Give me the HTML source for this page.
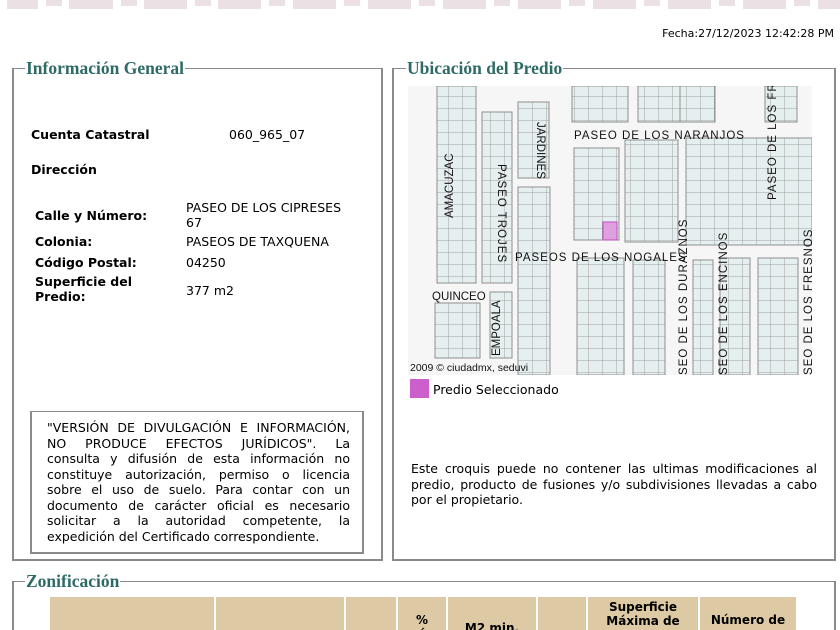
<!DOCTYPE html>
<html style="overflow:hidden;height:630px"><head><meta charset="utf-8"><style>
body{margin:0;width:840px;height:630px;overflow:hidden;background:#fff;font-family:"DejaVu Sans","Liberation Sans",sans-serif;font-size:12px;color:#000;position:relative}
.a{position:absolute}
.fs{position:absolute;border:2px solid #8a8a8a;border-top:1px solid #8a8a8a;box-sizing:border-box}
.lg{position:absolute;background:#fff;font-family:"Liberation Serif",serif;font-weight:bold;font-size:17.5px;color:#2e6b67;padding:0 1px;line-height:18px}
.b{font-weight:bold}
th{background:#ddc9a3;font-size:12px;font-weight:bold;padding:0;}
.j span{display:block;text-align:justify;text-align-last:justify;white-space:nowrap}
.j span.l{text-align-last:left}
</style></head><body>
<svg class="a" style="left:0;top:0" width="840" height="12">
<g fill="#ebe1e4">
<rect x="7" y="0" width="31" height="9"/><rect x="46" y="0" width="16" height="6"/><rect x="69" y="0" width="44" height="9"/><rect x="121" y="0" width="16" height="6"/><rect x="144" y="0" width="43" height="9"/><rect x="195" y="0" width="16" height="6"/><rect x="218" y="0" width="43" height="9"/><rect x="269" y="0" width="16" height="6"/><rect x="293" y="0" width="43" height="9"/><rect x="344" y="0" width="16" height="6"/><rect x="368" y="0" width="43" height="9"/><rect x="419" y="0" width="16" height="6"/><rect x="443" y="0" width="43" height="9"/><rect x="494" y="0" width="16" height="6"/><rect x="518" y="0" width="43" height="9"/><rect x="569" y="0" width="16" height="6"/><rect x="593" y="0" width="43" height="9"/><rect x="644" y="0" width="16" height="6"/><rect x="668" y="0" width="43" height="9"/><rect x="719" y="0" width="16" height="6"/><rect x="743" y="0" width="43" height="9"/><rect x="794" y="0" width="16" height="6"/><rect x="818" y="0" width="22" height="9"/>
</g></svg>
<div class="a" style="right:6px;top:27px;font-size:11px">Fecha:27/12/2023 12:42:28 PM</div>

<div class="fs" style="left:12px;top:68px;width:371px;height:493px"></div>
<div class="lg" style="left:25px;top:59px">Información General</div>
<div class="a b" style="left:31px;top:127px;font-size:12.5px">Cuenta Catastral</div>
<div class="a" style="left:229px;top:127px;font-size:12.5px">060_965_07</div>
<div class="a b" style="left:31px;top:162px;font-size:12.5px">Dirección</div>
<div class="a b" style="left:35px;top:208px;font-size:12.5px">Calle y Número:</div>
<div class="a" style="left:186px;top:200px;font-size:12.5px;line-height:15px">PASEO DE LOS CIPRESES<br>67</div>
<div class="a b" style="left:35px;top:234px;font-size:12.5px">Colonia:</div>
<div class="a" style="left:186px;top:234px;font-size:12.5px">PASEOS DE TAXQUENA</div>
<div class="a b" style="left:35px;top:255px;font-size:12.5px">Código Postal:</div>
<div class="a" style="left:186px;top:255px;font-size:12.5px">04250</div>
<div class="a b" style="left:35px;top:274px;font-size:12.5px;line-height:15px">Superficie del<br>Predio:</div>
<div class="a" style="left:186px;top:283px;font-size:12.5px">377 m2</div>
<div class="a" style="left:30px;top:411px;width:334px;height:143px;border:2px solid #8a8a8a;border-top:1px solid #8a8a8a;box-sizing:border-box"></div>
<div class="a j" style="left:47px;top:420px;width:303px;font-size:12.5px;line-height:15.5px">
<span>"VERSIÓN DE DIVULGACIÓN E INFORMACIÓN,</span>
<span>NO PRODUCE EFECTOS JURÍDICOS". La</span>
<span>consulta y difusión de esta información no</span>
<span>constituye autorización, permiso o licencia</span>
<span>sobre el uso de suelo. Para contar con un</span>
<span>documento de carácter oficial es necesario</span>
<span>solicitar a la autoridad competente, la</span>
<span class="l">expedición del Certificado correspondiente.</span>
</div>

<div class="fs" style="left:392px;top:68px;width:444px;height:493px"></div>
<div class="lg" style="left:406px;top:59px">Ubicación del Predio</div>
<svg class="a" style="left:408px;top:86px" width="404" height="289" viewBox="408 86 404 289" font-family="Liberation Sans,sans-serif" font-size="11.5" fill="#111">
<rect x="408" y="86" width="404" height="289" fill="#f6f6f6"/>
<defs><pattern id="g" width="14" height="12" patternUnits="userSpaceOnUse"><rect width="14" height="12" fill="#e6efef"/><path d="M0 0H14M0 0V12" stroke="#a0a0a0" stroke-width="1"/></pattern></defs>
<g fill="url(#g)" stroke="#8f8f8f">
<rect x="437" y="86" width="39" height="197"/>
<rect x="482" y="112" width="30" height="171"/>
<rect x="518" y="102" width="31" height="76"/>
<rect x="518" y="187" width="32" height="188"/>
<rect x="572" y="86" width="56" height="36"/>
<rect x="638" y="86" width="55" height="36"/>
<rect x="680" y="86" width="35" height="36"/>
<rect x="765" y="86" width="32" height="36"/>
<rect x="574" y="148" width="45" height="92"/>
<rect x="625" y="140" width="53" height="102"/>
<rect x="686" y="138" width="126" height="107"/>
<rect x="577" y="258" width="47" height="117"/>
<rect x="633" y="260" width="32" height="115"/>
<rect x="693" y="260" width="20" height="115"/>
<rect x="720" y="258" width="30" height="117"/>
<rect x="758" y="258" width="40" height="117"/>
<rect x="435" y="303" width="45" height="55"/>
<rect x="490" y="292" width="22" height="66"/>
</g>
<rect x="603" y="222" width="14" height="18" fill="#e0a0e0" stroke="#c050c0"/>
<text x="574" y="139" letter-spacing="1">PASEO DE LOS NARANJOS</text>
<text x="515" y="261" letter-spacing="1">PASEOS DE LOS NOGALES</text>
<text x="432" y="300">QUINCEO</text>
<text transform="translate(453,218) rotate(-90)">AMACUZAC</text>
<text transform="translate(498,164) rotate(90)" letter-spacing="1">PASEO TROJES</text>
<text transform="translate(537,122) rotate(90)">JARDINES</text>
<text transform="translate(776,200) rotate(-90)" letter-spacing="1">PASEO DE LOS FRA</text>
<text transform="translate(687,375) rotate(-90)" letter-spacing="1">SEO DE LOS DURAZNOS</text>
<text transform="translate(727,375) rotate(-90)" letter-spacing="1">SEO DE LOS ENCINOS</text>
<text transform="translate(812,375) rotate(-90)" letter-spacing="1">SEO DE LOS FRESNOS</text>
<text transform="translate(500,356) rotate(-90)">EMPOALA</text>
<text x="410" y="371" font-size="10.5">2009 © ciudadmx, seduvi</text>
</svg>
<div class="a" style="left:410px;top:379px;width:19px;height:19px;background:#cc5fcc"></div>
<div class="a" style="left:433px;top:382px;font-size:12.5px">Predio Seleccionado</div>
<div class="a j" style="left:411px;top:461px;width:406px;font-size:12.5px;line-height:15.5px">
<span>Este croquis puede no contener las ultimas modificaciones al</span>
<span>predio, producto de fusiones y/o subdivisiones llevadas a cabo</span>
<span class="l">por el propietario.</span>
</div>

<div class="fs" style="left:12px;top:581px;width:824px;height:80px"></div>
<div class="lg" style="left:25px;top:572px">Zonificación</div>
<table class="a" style="left:48px;top:597px;border-collapse:separate;border-spacing:2px 0" cellpadding="0">
<tr style="height:60px;vertical-align:top">
<th style="width:164px"></th><th style="width:128px"></th><th style="width:50px"></th>
<th style="width:48px;padding-top:16px">%<br>á</th><th style="width:88px;padding-top:24px">M2 min.</th><th style="width:48px"></th>
<th style="width:110px;padding-top:3px">Superficie<br>Máxima de<br>C</th><th style="width:96px;padding-top:16px">Número de</th>
</tr></table>
</body></html>
